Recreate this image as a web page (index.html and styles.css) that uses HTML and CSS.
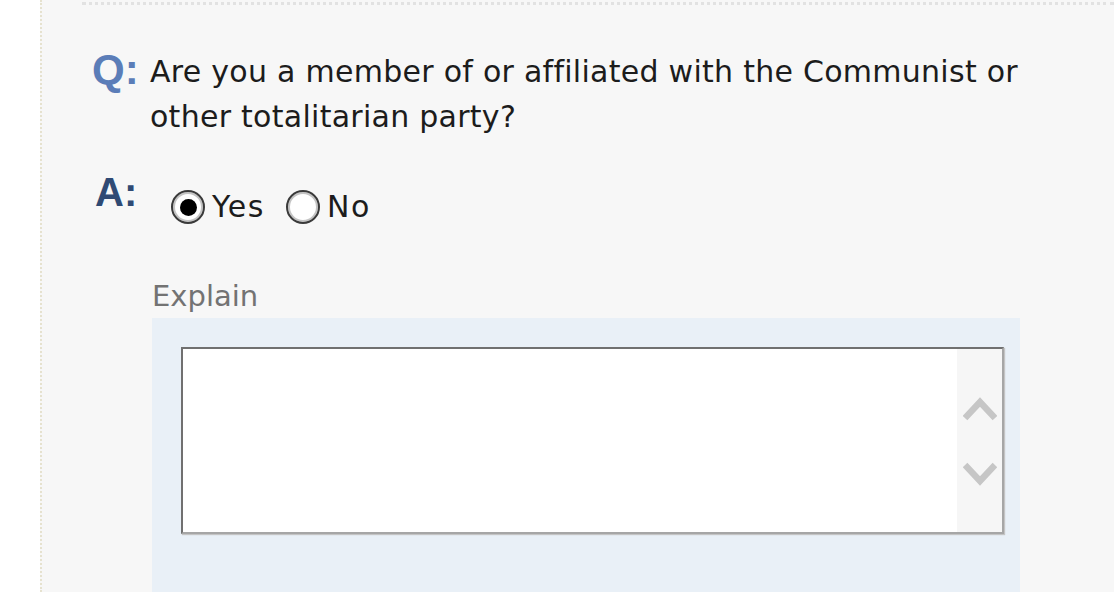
FILE: index.html
```html
<!DOCTYPE html>
<html>
<head>
<meta charset="utf-8">
<link rel="stylesheet" href="styles.css">
</head>
<body>
<div class="page">
  <div class="gutter"></div>
  <div class="main">
    <div class="topline"></div>
    <div class="qa">
      <div class="q-row">
        <div class="q-label">Q:</div>
        <div class="q-text">Are you a member of or affiliated with the Communist or other totalitarian party?</div>
      </div>
      <div class="a-row">
        <div class="a-label">A:</div>
        <div class="options">
          <label class="opt"><span class="radio checked"><span class="dot"></span></span><span class="opt-text">Yes</span></label>
          <label class="opt"><span class="radio"></span><span class="opt-text">No</span></label>
        </div>
      </div>
      <div class="explain">
        <div class="explain-label">Explain</div>
        <div class="explain-box">
          <div class="textarea">
            <div class="ta-body"></div>
            <div class="ta-scroll">
              <svg class="chev" width="34" height="26" viewBox="0 0 34 26"><path d="M2 22 L17 6 L32 22" fill="none" stroke="#c6c6c6" stroke-width="6.5"/></svg>
              <svg class="chev" width="34" height="26" viewBox="0 0 34 26"><path d="M2 4 L17 20 L32 4" fill="none" stroke="#c6c6c6" stroke-width="6.5"/></svg>
            </div>
          </div>
        </div>
      </div>
    </div>
  </div>
</div>
</body>
</html>
```
FILE: styles.css
```css
html, body {
  margin: 0;
  padding: 0;
  background: #ffffff;
}
body {
  font-family: "DejaVu Sans", Verdana, sans-serif;
  overflow: hidden;
}
.page {
  display: flex;
  height: 592px;
  overflow: hidden;
}
.gutter {
  width: 40px;
  background: #ffffff;
  flex: none;
}
.main {
  flex: 1;
  background: #f7f7f7;
  border-left: 2px dotted #e6e2cf;
  display: flex;
  flex-direction: column;
}
.topline {
  margin-top: 2px;
  margin-left: 40px;
  border-top: 3px dotted #e2e2e2;
}
.qa {
  padding-left: 50px;
  padding-top: 40px;
}
.q-row {
  display: flex;
  align-items: flex-start;
}
.q-label {
  width: 58px;
  flex: none;
  font-family: "Liberation Sans", Arial, sans-serif;
  font-weight: bold;
  font-size: 42px;
  line-height: 50px;
  color: #5b7db8;
}
.q-text {
  width: 880px;
  font-size: 30px;
  letter-spacing: 0.27px;
  line-height: 45px;
  color: #1c1c1c;
  padding-top: 4px;
}
.a-row {
  display: flex;
  align-items: flex-start;
  margin-top: 33px;
}
.a-label {
  width: 76px;
  flex: none;
  font-family: "Liberation Sans", Arial, sans-serif;
  font-weight: bold;
  font-size: 40px;
  line-height: 40px;
  color: #2f4a74;
  padding-left: 3px;
}
.options {
  display: flex;
  align-items: center;
  gap: 21px;
  padding-top: 18px;
}
.opt {
  display: flex;
  align-items: center;
  gap: 7px;
  height: 34px;
}
.radio {
  width: 30px;
  height: 30px;
  border: 2px solid #3a3a3a;
  border-radius: 50%;
  background: #fff;
  display: flex;
  align-items: center;
  justify-content: center;
  box-shadow: inset 0 0 0 2px #c4c4c4;
}
.dot {
  width: 17px;
  height: 17px;
  border-radius: 50%;
  background: #000;
}
.opt-text {
  font-size: 30px;
  letter-spacing: 1.5px;
  line-height: 34px;
  color: #1c1c1c;
}
.explain {
  margin-left: 60px;
  margin-top: 55px;
}
.explain-label {
  font-size: 29px;
  line-height: 34px;
  color: #737373;
  margin-bottom: 5px;
}
.explain-box {
  width: 839px;
  height: 260px;
  background: #e9f0f7;
  padding: 29px 0 0 29px;
}
.textarea {
  width: 819px;
  height: 183px;
  border-top: 2px solid #707070;
  border-left: 2px solid #707070;
  border-right: 2px solid #a6a6a6;
  border-bottom: 2px solid #a6a6a6;
  background: #fff;
  display: flex;
  box-shadow: 1px 1px 1px #c4c4c4;
}
.ta-body {
  flex: 1;
}
.ta-scroll {
  width: 45px;
  background: #f6f6f6;
  display: flex;
  flex-direction: column;
  align-items: center;
  padding-top: 47px;
  gap: 39px;
}
.chev {
  display: block;
}
```
